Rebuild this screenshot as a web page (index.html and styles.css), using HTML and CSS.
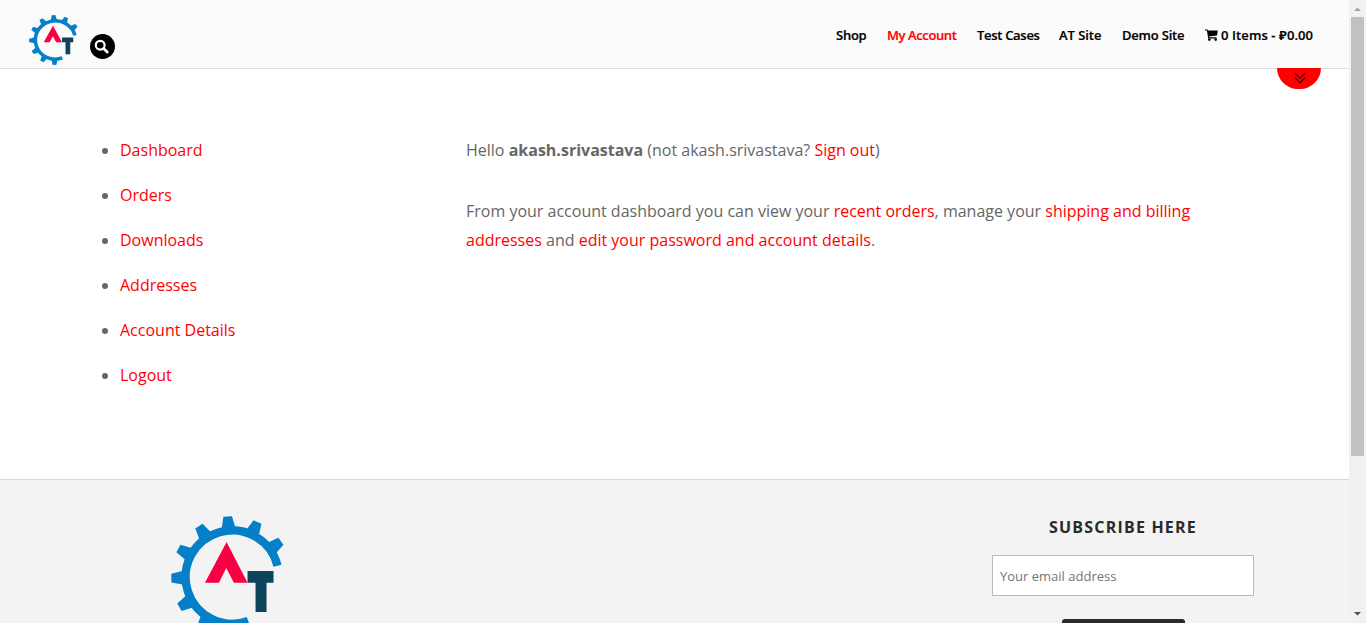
FILE: index.html
```html
<!DOCTYPE html>
<html lang="en">
<head>
<meta charset="utf-8">
<title>My Account</title>
<link rel="stylesheet" href="styles.css">
</head>
<body>
<svg class="defs" width="0" height="0">
  <symbol id="logo" viewBox="33 137 341 366" preserveAspectRatio="none">
    <path d="M352.8 286.1A140 140 0 1 0 264.9 451.6" fill="none" stroke="#057fc8" stroke-width="25"/>
    <g fill="#057fc8" transform="translate(216 320)">
      <path id="tooth" d="M145-21 182-13V13L145 21Z" transform="rotate(-36)"/>
      <use href="#tooth" transform="rotate(-29)"/>
      <use href="#tooth" transform="rotate(-58)"/>
      <use href="#tooth" transform="rotate(-87)"/>
      <use href="#tooth" transform="rotate(-116)"/>
      <use href="#tooth" transform="rotate(-145)"/>
      <use href="#tooth" transform="rotate(-174)"/>
      <use href="#tooth" transform="rotate(-203)"/>
      <use href="#tooth" transform="rotate(-232)"/>
    </g>
    <path d="M200 215 263 337H222L199 293 177 337H135Z" fill="#f90045"/>
    <path d="M263 302H341V337H320V425H287V337H263Z" fill="#0b445b"/>
  </symbol>
</svg>
<div class="window">
  <div class="page">
    <header class="header">
      <svg class="header-logo"><use href="#logo"/></svg>
      <span class="search"><svg width="25" height="25" viewBox="0 0 25 25"><circle cx="10.2" cy="11.2" r="4.4" fill="none" stroke="#fff" stroke-width="2.2"/><path d="M13.6 14.5 17.2 18" stroke="#fff" stroke-width="2.8" stroke-linecap="round"/></svg></span>
      <nav class="nav">
        <a class="shop">Shop</a><a class="account">My Account</a><a class="cases">Test Cases</a><a class="at">AT Site</a><a class="demo">Demo Site</a>
        <a class="cart"><svg width="13" height="12" viewBox="0 0 13 12"><path d="M0 .5H2.5L3 1.6H12.8L12 6.6 4 7.4 4.2 8.3H11.5V9.5H3.2L1.9 1.6H0Z"/><circle cx="4.3" cy="10.6" r="1.3"/><circle cx="10.7" cy="10.6" r="1.3"/></svg><span>0 Items - ₽0.00</span></a>
      </nav>
      <span class="tab"><svg width="12" height="12" viewBox="0 0 12 12"><path d="M.6.8 6 6.2 11.4.8M.6 5.3 6 10.7 11.4 5.3" fill="none" stroke="#330000" stroke-width="1.1"/></svg></span>
    </header>
    <main class="main">
      <ul class="menu">
        <li><a>Dashboard</a></li><li><a>Orders</a></li><li><a>Downloads</a></li><li><a>Addresses</a></li><li><a>Account Details</a></li><li><a>Logout</a></li>
      </ul>
      <section class="content">
        <p>Hello <strong>akash.srivastava</strong> (not akash.srivastava? <a>Sign out</a>)</p>
        <p>From your account dashboard you can view your <a>recent orders</a>, manage your <a>shipping and billing<br>addresses</a> and <a>edit your password and account details</a>.</p>
      </section>
    </main>
    <footer class="footer">
      <svg class="footer-logo"><use href="#logo"/></svg>
      <form class="subscribe">
        <h2>SUBSCRIBE HERE</h2>
        <input type="text" placeholder="Your email address">
        <span class="button"></span>
      </form>
    </footer>
  </div>
  <div class="scrollbar">
    <svg width="17" height="17"><path d="M5 11 8.5 7.5 12 11Z" fill="#a3a3a3"/></svg>
    <span class="thumb"></span>
    <svg class="down" width="17" height="17"><path d="M5 6 8.5 9.5 12 6Z" fill="#505050"/></svg>
  </div>
</div>
</body>
</html>
```
FILE: styles.css
```css
* { box-sizing: border-box; }
body { margin: 0; overflow: hidden; background: #fff; color: #666; font: 16px/29px "Open Sans", "Noto Sans", sans-serif; }
svg { display: block; flex: none; }
.defs { position: absolute; }
a { color: #f00; }
.window { display: flex; height: 623px; overflow: hidden; }
.page { width: 1349px; flex: none; display: flex; flex-direction: column; }
.header { position: relative; flex: none; height: 69px; padding: 0 36px 0 29px; background: #fbfbfb; border-bottom: 1px solid #dedede; display: flex; align-items: flex-start; }
.header-logo { width: 49px; height: 50px; margin-top: 15px; }
.search { width: 25px; height: 25px; margin: 34px 0 0 12px; border-radius: 50%; background: #000; }
.nav { margin: 25px 0 0 auto; display: flex; gap: 21px; font: 600 13px/20px "Open Sans", "Noto Sans", sans-serif; letter-spacing: -0.3px; -webkit-text-stroke: 0.2px; white-space: nowrap; }
.nav a { color: #000; }
.nav .account { width: 69px; color: #f00; letter-spacing: -0.4px; }
.shop { width: 30px; letter-spacing: -0.25px; }
.cases { width: 61px; }
.at { width: 42px; letter-spacing: -0.05px; }
.demo { width: 62px; letter-spacing: -0.2px; }
.cart { width: 108px; display: flex; align-items: center; gap: 3px; letter-spacing: 0.1px; }
.tab { position: absolute; left: 1277px; top: 68px; width: 44px; height: 21px; border-radius: 0 0 22px 22px; background: #f00; display: flex; justify-content: center; padding: 4px 0 0 1px; }
.main { flex: none; height: 410px; padding: 66px 96px 0 80px; display: flex; }
.menu { width: 386px; margin: 0; padding-left: 40px; }
.menu li { height: 45px; line-height: 30px; }
.content { padding-top: 1px; white-space: nowrap; }
.content p { margin: 0 0 32px; }
.footer { flex: 1; min-height: 0; background: #f3f3f3; border-top: 1px solid #d8d8d8; padding: 36px 95px 0 171px; display: flex; justify-content: space-between; }
.footer-logo { width: 113.5px; height: 122px; }
.subscribe { width: 262px; display: flex; flex-direction: column; align-items: center; }
.subscribe h2 { flex: none; margin: 0; color: #2a2a2a; font: bold 16px/23px "Open Sans", sans-serif; letter-spacing: 1.2px; white-space: nowrap; }
.subscribe input { flex: none; width: 262px; height: 41px; margin: 16px 0 23px; padding: 1px 7px 0; border: 1px solid #bbb; background: #fff; font: 13px "Open Sans", sans-serif; }
.subscribe input::placeholder { color: #757575; }
.button { width: 123px; height: 40px; flex: none; border-radius: 3px; background: #2a2a2a; }
.scrollbar { width: 17px; flex: none; background: #f1f1f1; display: flex; flex-direction: column; }
.thumb { width: 13px; height: 439px; margin-left: 2px; background: #c1c1c1; }
.down { margin-top: auto; }
```
